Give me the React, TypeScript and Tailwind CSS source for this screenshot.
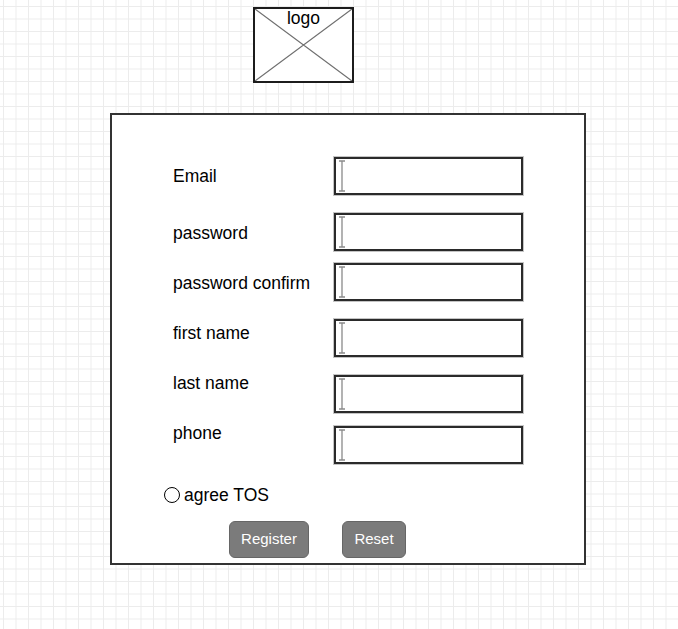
const labels = ['Email', 'password', 'password confirm', 'first name', 'last name', 'phone']

// top margins between rows, taken from the mock
const labelGaps = ['mt-0', 'mt-[37px]', 'mt-[30px]', 'mt-[30px]', 'mt-[30px]', 'mt-[30px]']
const inputGaps = ['mt-0', 'mt-[18px]', 'mt-[12px]', 'mt-[18px]', 'mt-[18px]', 'mt-[13px]']

const TextCursor = () => (
  <svg width="8" height="32" viewBox="0 0 8 32" className="ml-[2px]">
    <path d="M1 1h6M4 1v30M1 31h6" stroke="#8a8a8a" strokeWidth="1.3" fill="none" />
  </svg>
)

const FakeInput = ({ className }: { className?: string }) => (
  <div
    className={`flex h-[38px] w-[189px] items-center border-2 border-[#2a2a2a] bg-white shadow-[0_0_0_1px_#c4c4c4] ${className ?? ''}`}
  >
    <TextCursor />
  </div>
)

const Logo = () => (
  <div className="relative ml-[253px] mt-[7px] flex h-[76px] w-[101px] flex-col items-center border-2 border-[#1c1c1c] bg-white">
    <svg className="absolute inset-0 h-full w-full" viewBox="0 0 97 72" preserveAspectRatio="none">
      <path d="M0 0L97 72M97 0L0 72" stroke="#707070" strokeWidth="1.2" fill="none" />
    </svg>
    <span className="relative text-[17.5px] leading-[18px] text-black">logo</span>
  </div>
)

export default function App() {
  return (
    <div className="h-[629px] w-[678px] overflow-hidden bg-white bg-[linear-gradient(to_right,#ececec_1px,transparent_1px),linear-gradient(to_bottom,#ececec_1px,transparent_1px)] [background-position:3px_6px] [background-size:12.5px_12.5px] font-['Liberation_Sans',Arial,sans-serif]">
      <Logo />

      <div className="ml-[110px] mt-[30px] flex h-[452px] w-[476px] flex-col border-2 border-[#333] bg-white">
        <div className="flex">
          <div className="ml-[61px] mt-[51px] flex w-[161px] flex-col">
            {labels.map((label, i) => (
              <span key={label} className={`h-5 text-[17.5px] leading-5 text-black ${labelGaps[i]}`}>
                {label}
              </span>
            ))}
          </div>
          <div className="mt-[42px] flex flex-col">
            {labels.map((label, i) => (
              <FakeInput key={label} className={inputGaps[i]} />
            ))}
          </div>
        </div>

        <label className="ml-[52px] mt-[21px] flex h-5 items-center">
          <span className="h-[16px] w-[16px] rounded-full border-[1.5px] border-black bg-white" />
          <span className="ml-[4px] text-[17.5px] leading-5 text-black">agree TOS</span>
        </label>

        <div className="ml-[117px] mt-[16px] flex gap-[33px]">
          <button className="h-[37px] w-[80px] rounded-[6px] border border-[#666] bg-[#7b7b7b] text-[15px] text-white">
            Register
          </button>
          <button className="h-[37px] w-[64px] rounded-[6px] border border-[#666] bg-[#7b7b7b] text-[15px] text-white">
            Reset
          </button>
        </div>
      </div>
    </div>
  )
}
